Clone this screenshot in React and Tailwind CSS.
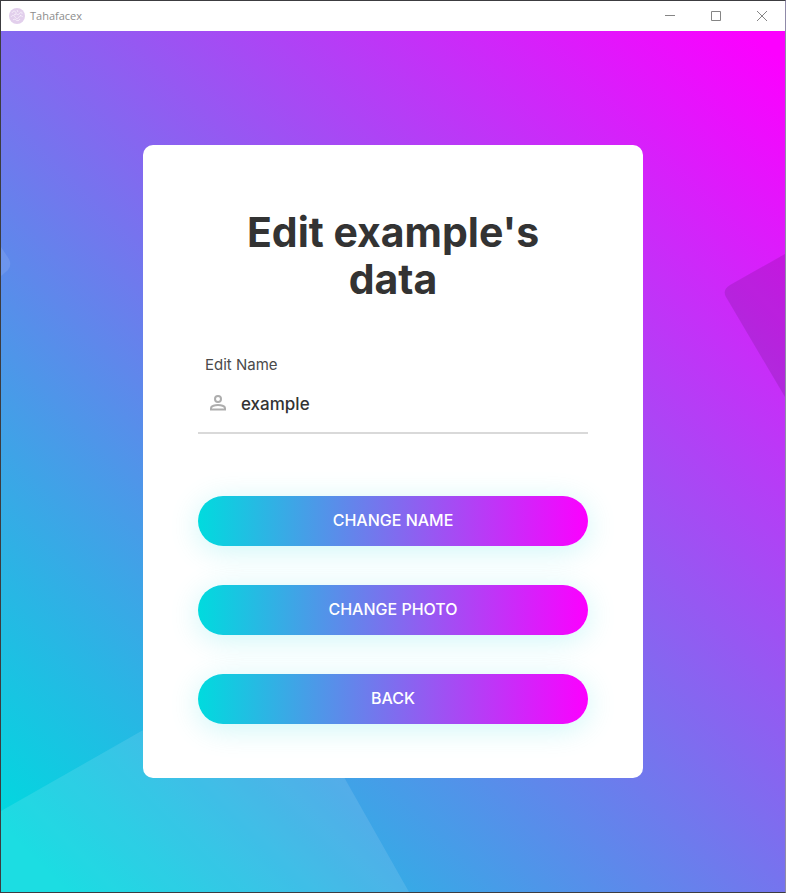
import React from 'react';

function TitleBar() {
  return (
    <header className="flex h-[30px] shrink-0 items-center bg-white">
      <svg className="ml-2 size-4" viewBox="0 0 16 16" fill="none" aria-hidden="true">
        <circle cx="8" cy="8" r="8" fill="#e2cfec" />
        <path
          d="M3 5c1-3 4-2 4 0s3 2 4 0 2-1 2 1M2 9c1-2 3-2 4 0s3 2 4 0 3-1 4 0M4 12c1-1 2-1 3 0s3 1 4-1M8 2l1 2M5 7l2-1M11 7l1 1"
          stroke="#f6eefa"
          strokeWidth="1"
        />
      </svg>
      <h2 className="ml-[5px] font-['Open_Sans',sans-serif] text-[11px] leading-4 text-[#8c8c8c]">Tahafacex</h2>
      <div className="ml-auto flex h-full text-[#858585]">
        <button type="button" aria-label="Minimize" className="flex w-[46px] items-center justify-center">
          <svg className="size-[10px]" viewBox="0 0 10 10" fill="none" stroke="currentColor">
            <path d="M0 4.500h10" />
          </svg>
        </button>
        <button type="button" aria-label="Maximize" className="flex w-[46px] items-center justify-center">
          <svg className="size-[10px]" viewBox="0 0 10 10" fill="none" stroke="currentColor">
            <path d="M.5.5h9v9h-9z" />
          </svg>
        </button>
        <button type="button" aria-label="Close" className="flex w-[46px] items-center justify-center">
          <svg className="size-[10px]" viewBox="0 0 10 10" fill="none" stroke="currentColor">
            <path d="M0 0l10 10M10 0L0 10" />
          </svg>
        </button>
      </div>
    </header>
  );
}

function Backdrop() {
  return (
    <div className="pointer-events-none absolute inset-0 overflow-hidden" aria-hidden="true">
      <svg className="absolute bottom-0 left-0" width="408" height="238" viewBox="0 0 408 238">
        <path d="M0 157L274 1 408 238H0z" fill="#fff" fillOpacity="0.11" />
      </svg>
      <svg className="absolute top-[223px] right-0" width="61" height="143" viewBox="0 0 61 143">
        <path d="M61 0L6 31Q-2 36 2 43L61 143z" fill="#000" fillOpacity="0.11" />
      </svg>
      <svg className="absolute top-[216px] left-0" width="10" height="30" viewBox="0 0 10 30">
        <path d="M0 0L8 12Q11 18 7 23L0 29z" fill="#fff" fillOpacity="0.1" />
      </svg>
    </div>
  );
}

function GradientButton({ children, type = 'button' }) {
  return (
    <button
      type={type}
      className="h-[50px] w-full rounded-full bg-[linear-gradient(90deg,#00dbde,#fc00ff)] pb-0.5 text-base font-medium text-white uppercase shadow-[0_5px_30px_0_rgba(3,216,222,0.2)]"
    >
      {children}
    </button>
  );
}

export default function App() {
  return (
    <div className="flex min-h-screen flex-col border border-[#3c3c40] border-r-[#8f8aa8] font-[Inter,sans-serif]">
      <TitleBar />
      <main className="relative flex grow items-center justify-center bg-[linear-gradient(45deg,#00d9df_4%,#fc00ff_98%)] p-4">
        <Backdrop />
        <form
          className="relative w-full max-w-[500px] rounded-[10px] bg-white px-[55px] pt-[64px] pb-[54px]"
          onSubmit={(event) => event.preventDefault()}
        >
          <h1 className="px-6 text-center text-[41px] leading-[47px] font-bold text-[#333333]">
            Edit example's data
          </h1>
          <div className="mt-[51px] border-b-2 border-[#d9d9d9]">
            <label htmlFor="name" className="block pl-[7px] text-[15px] leading-[21px] text-[#4a4a4a]">
              Edit Name
            </label>
            <div className="flex h-[57px] items-center pl-[11px]">
              <svg className="size-[18px] shrink-0" viewBox="0 0 18 18" fill="none" stroke="#adadad" strokeWidth="2" aria-hidden="true">
                <circle cx="9" cy="4" r="3" />
                <path d="M2 14.500v-1.500C2 11 6 10 9 10s7 1 7 3v1.500z" />
              </svg>
              <input
                id="name"
                type="text"
                defaultValue="example"
                className="ml-[14px] h-full min-w-0 grow bg-transparent text-[17px] font-medium text-[#333333] outline-none"
              />
            </div>
          </div>
          <div className="mt-[62px] flex flex-col gap-[39px]">
            <GradientButton type="submit">Change name</GradientButton>
            <GradientButton>Change photo</GradientButton>
            <GradientButton>Back</GradientButton>
          </div>
        </form>
      </main>
    </div>
  );
}
